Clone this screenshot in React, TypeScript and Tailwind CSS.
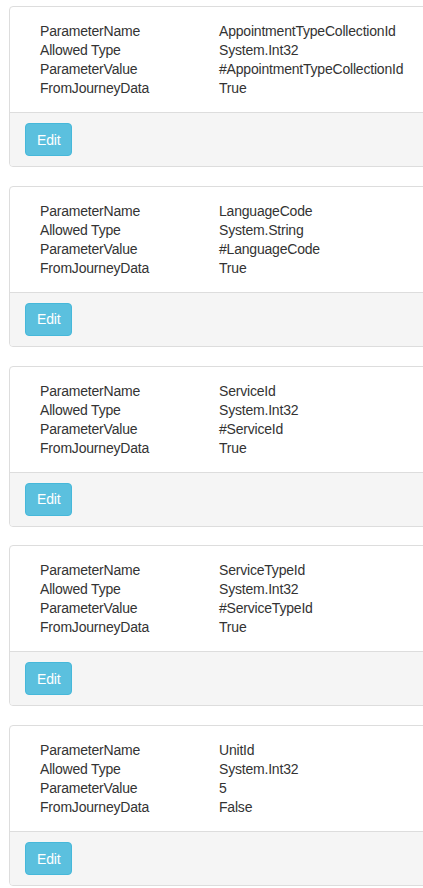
const params = [
  { name: 'AppointmentTypeCollectionId', type: 'System.Int32', value: '#AppointmentTypeCollectionId', journey: 'True' },
  { name: 'LanguageCode', type: 'System.String', value: '#LanguageCode', journey: 'True' },
  { name: 'ServiceId', type: 'System.Int32', value: '#ServiceId', journey: 'True' },
  { name: 'ServiceTypeId', type: 'System.Int32', value: '#ServiceTypeId', journey: 'True' },
  { name: 'UnitId', type: 'System.Int32', value: '5', journey: 'False' },
];

function Row({ label, value }: { label: string; value: string }) {
  return (
    <div className="flex h-[19px] items-center">
      <div className="w-[179px] shrink-0">{label}</div>
      <div className="whitespace-nowrap">{value}</div>
    </div>
  );
}

export default function App() {
  return (
    <div className="w-[423px] h-[888px] overflow-hidden bg-white pt-[6px] pl-[9px] font-['Liberation_Sans',Arial,sans-serif] text-[14px] tracking-[-0.2px] text-[#333]">
      <div className="w-[440px] flex flex-col gap-[18.75px]">
        {params.map((p) => (
          <div key={p.name} className="border border-[#ddd] rounded-[4px] overflow-hidden bg-white">
            <div className="h-[105px] pt-[15px] pl-[30px]">
              <Row label="ParameterName" value={p.name} />
              <Row label="Allowed Type" value={p.type} />
              <Row label="ParameterValue" value={p.value} />
              <Row label="FromJourneyData" value={p.journey} />
            </div>
            <div className="h-[54px] border-t border-[#ddd] bg-[#f5f5f5] px-[15px] pt-[10px]">
              <button className="h-[33px] px-[11px] rounded-[4px] border border-[#46b8da] bg-[#5bc0de] text-white text-[14px] leading-[20px]">
                Edit
              </button>
            </div>
          </div>
        ))}
      </div>
    </div>
  );
}
